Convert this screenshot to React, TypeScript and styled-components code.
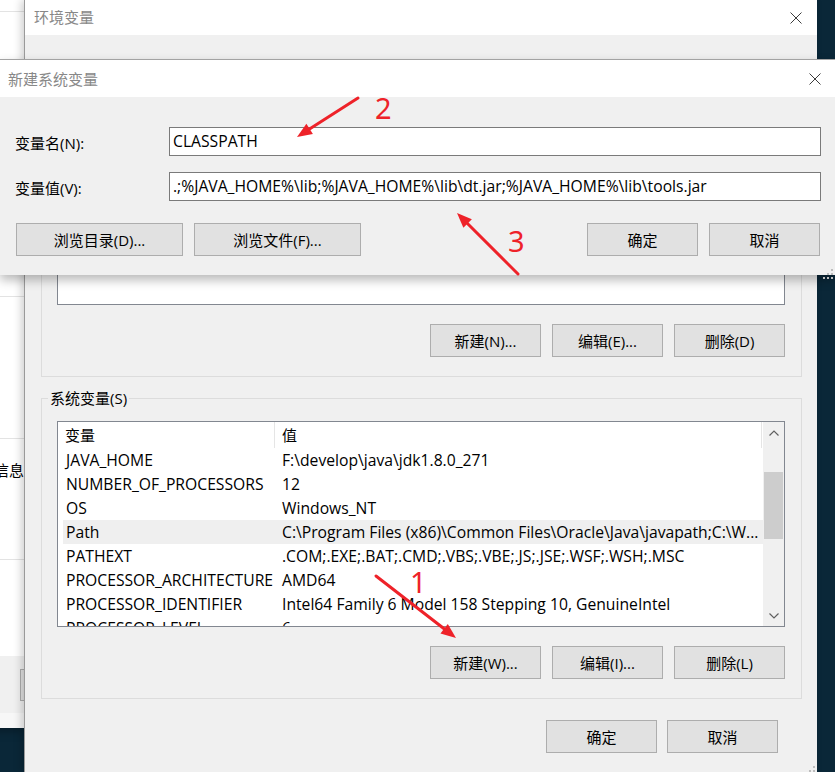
import React from 'react'
import styled, { createGlobalStyle } from 'styled-components'

const GlobalStyle = createGlobalStyle`
	html, body {
		margin: 0;
		padding: 0;
	}
	body {
		background: #0a2738;
		font-family: "Open Sans", "Noto Sans CJK SC", sans-serif;
		font-size: 15px;
		color: #000;
	}
	* {
		box-sizing: border-box;
	}
`

const Desktop = styled.div`
	position: relative;
	width: 835px;
	height: 772px;
	overflow: hidden;
	background: #0a2738;
`

/* windows sit on the desktop at their own coordinates */
const Win = styled.div<{ $left: number; $top: number; $width: number; $height: number }>`
	position: absolute;
	left: ${(p) => p.$left}px;
	top: ${(p) => p.$top}px;
	width: ${(p) => p.$width}px;
	height: ${(p) => p.$height}px;
	display: flex;
	flex-direction: column;
`

const SysPropsWin = styled(Win)`
	background: #fff;
	box-shadow: 0 2px 10px rgba(0, 0, 0, 0.35);
`

const EnvWin = styled(Win)`
	background: #f0f0f0;
	border-left: 1px solid #9a9a9a;
	box-shadow: -3px 0 8px rgba(0, 0, 0, 0.18);
`

const DialogWin = styled(Win)`
	background: #f0f0f0;
	border-top: 1px solid #a3a3a3;
	box-shadow: 0 5px 10px rgba(0, 0, 0, 0.28);
`

const TitleBar = styled.div<{ $height: number; $indent: number; $right: number }>`
	flex: none;
	height: ${(p) => p.$height}px;
	background: #fff;
	display: flex;
	align-items: center;
	justify-content: space-between;
	padding: 0 ${(p) => p.$right}px 0 ${(p) => p.$indent}px;
	line-height: 20px;
	color: #888;
	font-size: 15px;
`

const TitleText = styled.span<{ $lift?: number }>`
	margin-top: ${(p) => -(p.$lift || 0)}px;
`

const CloseX = () => (
	<svg width="12" height="12" viewBox="0 0 12 12">
		<path d="M0.5 0.5 L11.5 11.5 M11.5 0.5 L0.5 11.5" stroke="#3c3c3c" strokeWidth="1" fill="none" />
	</svg>
)

const Grip = styled.div`
	position: absolute;
	right: 2px;
	bottom: 2px;
	width: 10px;
	height: 10px;
`

const GripDots = () => (
	<Grip>
		<svg width="10" height="10" viewBox="0 0 10 10">
			{[
				[8, 0],
				[4, 4],
				[8, 4],
				[0, 8],
				[4, 8],
				[8, 8],
			].map(([x, y]) => (
				<rect key={`${x}-${y}`} x={x} y={y} width="2" height="2" fill="#bdbdbd" />
			))}
		</svg>
	</Grip>
)

/* left window (system properties), mostly hidden */
const PaneRow = styled.div<{ $h: number; $line?: boolean; $pad?: number }>`
	flex: none;
	height: ${(p) => p.$h}px;
	border-bottom: ${(p) => (p.$line ? '1px solid #e3e3e3' : 'none')};
	display: flex;
	justify-content: flex-end;
	padding: ${(p) => p.$pad || 0}px 1px 0 0;
	line-height: 20px;
	white-space: nowrap;
`

const PaneFooter = styled.div`
	flex: none;
	height: 57px;
	background: #f0f0f0;
	padding: 13px 0 0 320px;
`

const PaneButton = styled.div`
	width: 80px;
	height: 32px;
	background: #e1e1e1;
	border: 1px solid #adadad;
`

const PaneBottom = styled.div`
	flex: 1;
	background: #f7f7f7;
`

/* environment window body */
const EnvBody = styled.div`
	flex: 1;
	padding: 27px 15px 0 16px;
	display: flex;
	flex-direction: column;
`

const Group = styled.fieldset<{ $gap: number; $padTop: number }>`
	margin: ${(p) => p.$gap}px 0 0 0;
	padding: ${(p) => p.$padTop}px 16px 19px 15px;
	border: 1px solid #dcdcdc;
	min-width: 0;
`

const GroupTitle = styled.legend`
	margin-left: -9px;
	padding: 0 2px;
	line-height: 20px;
	font-size: 15px;
`

const ListBox = styled.div<{ $height: number }>`
	height: ${(p) => p.$height}px;
	background: #fff;
	border: 1px solid #828790;
	display: flex;
	overflow: hidden;
`

const ListMain = styled.div`
	flex: 1;
	overflow: hidden;
	padding-left: 5px;
`

const ListHeader = styled.div`
	display: grid;
	grid-template-columns: 212px 487px;
	height: 26px;
	line-height: 26px;
`

const HeaderCell = styled.div<{ $pad: number }>`
	padding-left: ${(p) => p.$pad}px;
	border-right: 1px solid #e5e5e5;
`

const Row = styled.div<{ $selected?: boolean }>`
	display: grid;
	grid-template-columns: 212px 487px;
	height: 24px;
	line-height: 24px;
	font-size: 15.7px;
	background: ${(p) => (p.$selected ? '#efefef' : 'transparent')};
	white-space: nowrap;
`

const Cell = styled.div<{ $pad: number }>`
	padding-left: ${(p) => p.$pad}px;
	overflow: hidden;
`

const ScrollBar = styled.div`
	flex: none;
	width: 21px;
	background: #f0f0f0;
	display: flex;
	flex-direction: column;
`

const ScrollArrow = styled.div`
	flex: none;
	height: 21px;
	display: flex;
	align-items: center;
	justify-content: center;
`

const ScrollTrack = styled.div`
	flex: 1;
	padding: 29px 1px 0 1px;
`

const ScrollThumb = styled.div`
	height: 67px;
	background: #cdcdcd;
`

const Chevron = ({ up }: { up?: boolean }) => (
	<svg width="10" height="6" viewBox="0 0 10 6">
		<path
			d={up ? 'M0.5 5.5 L5 1 L9.5 5.5' : 'M0.5 0.5 L5 5 L9.5 0.5'}
			stroke="#606060"
			strokeWidth="1.2"
			fill="none"
		/>
	</svg>
)

const ButtonRow = styled.div<{ $top: number; $gap: number; $right?: number }>`
	display: flex;
	justify-content: flex-end;
	gap: ${(p) => p.$gap}px;
	margin-top: ${(p) => p.$top}px;
	padding-right: ${(p) => p.$right || 0}px;
`

const Button = styled.div<{ $width: number }>`
	width: ${(p) => p.$width}px;
	height: 33px;
	background: #e1e1e1;
	border: 1px solid #adadad;
	display: flex;
	align-items: center;
	justify-content: center;
	line-height: 20px;
	font-size: 15px;
	white-space: nowrap;
`

/* new variable dialog */
const DialogBody = styled.div`
	flex: 1;
	padding: 30px 14px 19px 15px;
	display: flex;
	flex-direction: column;
`

const FieldGrid = styled.div`
	display: grid;
	grid-template-columns: 154px 1fr;
	row-gap: 16px;
	align-items: center;
`

const Label = styled.div`
	line-height: 20px;
	padding-top: 2px;
`

const Field = styled.div`
	height: 29px;
	background: #fff;
	border: 1px solid #7a7a7a;
	padding-left: 3px;
	line-height: 27px;
	font-size: 15.7px;
	white-space: nowrap;
	overflow: hidden;
`

const DialogButtons = styled.div`
	display: flex;
	justify-content: space-between;
	margin-top: 22px;
	padding: 0 1px;
`

const ButtonGroup = styled.div`
	display: flex;
	gap: 11px;
`

/* red annotations drawn over the screenshot */
const Marks = styled.svg`
	position: absolute;
	left: 0;
	top: 0;
	pointer-events: none;
`

const RED = '#ee2229'

const Arrow = ({ x1, y1, x2, y2 }: { x1: number; y1: number; x2: number; y2: number }) => {
	const len = Math.hypot(x2 - x1, y2 - y1)
	const ux = (x2 - x1) / len
	const uy = (y2 - y1) / len
	const bx = x2 - ux * 15
	const by = y2 - uy * 15
	const pts = `${x2},${y2} ${bx - uy * 6},${by + ux * 6} ${bx + uy * 6},${by - ux * 6}`
	return (
		<g>
			<line x1={x1} y1={y1} x2={bx + ux * 2} y2={by + uy * 2} stroke={RED} strokeWidth="3" strokeLinecap="round" />
			<polygon points={pts} fill={RED} />
		</g>
	)
}

const rows = [
	['JAVA_HOME', 'F:\\develop\\java\\jdk1.8.0_271'],
	['NUMBER_OF_PROCESSORS', '12'],
	['OS', 'Windows_NT'],
	['Path', 'C:\\Program Files (x86)\\Common Files\\Oracle\\Java\\javapath;C:\\W...'],
	['PATHEXT', '.COM;.EXE;.BAT;.CMD;.VBS;.VBE;.JS;.JSE;.WSF;.WSH;.MSC'],
	['PROCESSOR_ARCHITECTURE', 'AMD64'],
	['PROCESSOR_IDENTIFIER', 'Intel64 Family 6 Model 158 Stepping 10, GenuineIntel'],
	['PROCESSOR_LEVEL', '6'],
]

export default function App() {
	return (
		<Desktop>
			<GlobalStyle />

			<SysPropsWin $left={-300} $top={0} $width={325} $height={728}>
				<PaneRow $h={12} $line />
				<PaneRow $h={285} $line />
				<PaneRow $h={142} $line />
				<PaneRow $h={121} $line $pad={21}>
					系统信息
				</PaneRow>
				<PaneRow $h={96} />
				<PaneFooter>
					<PaneButton />
				</PaneFooter>
				<PaneBottom />
			</SysPropsWin>

			<EnvWin $left={24} $top={0} $width={793} $height={772}>
				<TitleBar $height={35} $indent={9} $right={15}>
					<TitleText $lift={2}>环境变量</TitleText>
					<CloseX />
				</TitleBar>
				<EnvBody>
					{/* user variables: its caption sits behind the new-variable dialog */}
					<Group $gap={10} $padTop={22}>
						<ListBox $height={210} />
						<ButtonRow $top={19} $gap={11}>
							<Button $width={111}>新建(N)...</Button>
							<Button $width={111}>编辑(E)...</Button>
							<Button $width={111}>删除(D)</Button>
						</ButtonRow>
					</Group>

					<Group $gap={11} $padTop={13}>
						<GroupTitle>系统变量(S)</GroupTitle>
						<ListBox $height={206}>
							<ListMain>
								<ListHeader>
									<HeaderCell $pad={2}>变量</HeaderCell>
									<HeaderCell $pad={7}>值</HeaderCell>
								</ListHeader>
								{rows.map(([name, value]) => (
									<Row key={name} $selected={name === 'Path'}>
										<Cell $pad={3}>{name}</Cell>
										<Cell $pad={7}>{value}</Cell>
									</Row>
								))}
							</ListMain>
							<ScrollBar>
								<ScrollArrow>
									<Chevron up />
								</ScrollArrow>
								<ScrollTrack>
									<ScrollThumb />
								</ScrollTrack>
								<ScrollArrow>
									<Chevron />
								</ScrollArrow>
							</ScrollBar>
						</ListBox>
						<ButtonRow $top={19} $gap={11}>
							<Button $width={111}>新建(W)...</Button>
							<Button $width={111}>编辑(I)...</Button>
							<Button $width={111}>删除(L)</Button>
						</ButtonRow>
					</Group>

					<ButtonRow $top={21} $gap={10} $right={24}>
						<Button $width={111}>确定</Button>
						<Button $width={111}>取消</Button>
					</ButtonRow>
				</EnvBody>
				<GripDots />
			</EnvWin>

			<DialogWin $left={0} $top={59} $width={835} $height={216}>
				<TitleBar $height={37} $indent={8} $right={14}>
					<TitleText>新建系统变量</TitleText>
					<CloseX />
				</TitleBar>
				<DialogBody>
					<FieldGrid>
						<Label>变量名(N):</Label>
						<Field>CLASSPATH</Field>
						<Label>变量值(V):</Label>
						<Field>.;%JAVA_HOME%\lib;%JAVA_HOME%\lib\dt.jar;%JAVA_HOME%\lib\tools.jar</Field>
					</FieldGrid>
					<DialogButtons>
						<ButtonGroup>
							<Button $width={167}>浏览目录(D)...</Button>
							<Button $width={167}>浏览文件(F)...</Button>
						</ButtonGroup>
						<ButtonGroup>
							<Button $width={111}>确定</Button>
							<Button $width={111}>取消</Button>
						</ButtonGroup>
					</DialogButtons>
				</DialogBody>
				<GripDots />
			</DialogWin>

			<Marks width="835" height="772" viewBox="0 0 835 772">
				<Arrow x1={358} y1={98} x2={297} y2={137} />
				<Arrow x1={518} y1={274} x2={457} y2={213} />
				<Arrow x1={376} y1={576} x2={456} y2={638} />
				<g fill={RED} fontFamily="'Noto Sans', sans-serif" fontSize="29">
					<text x="375" y="119">2</text>
					<text x="508" y="252">3</text>
					<text x="410" y="593">1</text>
				</g>
			</Marks>
		</Desktop>
	)
}
